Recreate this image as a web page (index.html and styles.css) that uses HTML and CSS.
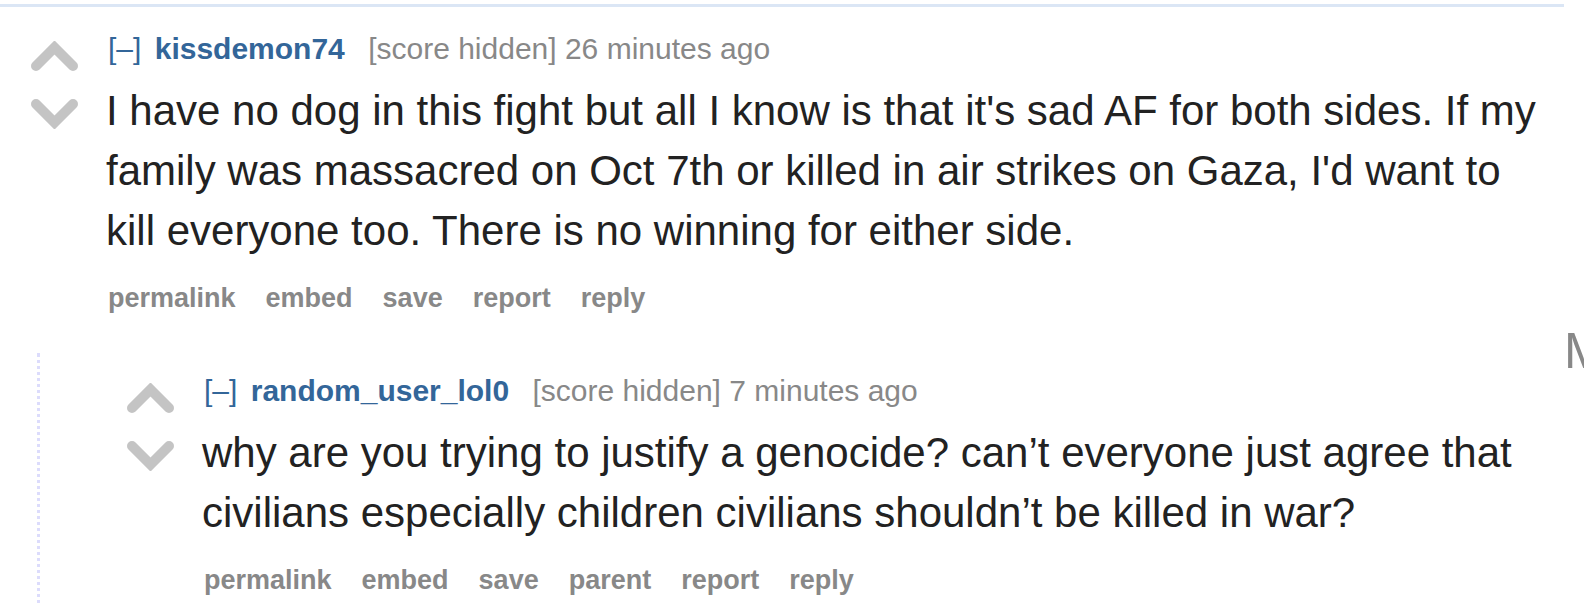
FILE: index.html
```html
<!DOCTYPE html>
<html lang="en">
<head>
<meta charset="utf-8" />
<title>comments</title>
<link rel="stylesheet" href="styles.css">
</head>
<body>
<div class="page">
  <div class="content">

    <div class="comment">
      <div class="thing">
        <div class="midcol">
          <svg class="arrow" viewBox="0 0 47 30"><polyline points="5,25 23.5,6.5 42,25" /></svg>
          <svg class="arrow" viewBox="0 0 47 30"><polyline points="5,5 23.5,23.5 42,5" /></svg>
        </div>
        <div class="entry">
          <p class="tagline"><a class="expand">[–]</a> <a class="author">kissdemon74</a> <span class="score">[score hidden]</span> <time>26 minutes ago</time></p>
          <div class="md"><p>I have no dog in this fight but all I know is that it's sad AF for both sides. If my family was massacred on Oct 7th or killed in air strikes on Gaza, I'd want to kill everyone too. There is no winning for either side.</p></div>
          <ul class="buttons">
            <li><a>permalink</a></li>
            <li><a>embed</a></li>
            <li><a>save</a></li>
            <li><a>report</a></li>
            <li><a>reply</a></li>
          </ul>
        </div>
      </div>

      <div class="child">
        <div class="comment">
          <div class="thing">
            <div class="midcol">
              <svg class="arrow" viewBox="0 0 47 30"><polyline points="5,25 23.5,6.5 42,25" /></svg>
              <svg class="arrow" viewBox="0 0 47 30"><polyline points="5,5 23.5,23.5 42,5" /></svg>
            </div>
            <div class="entry">
              <p class="tagline"><a class="expand">[–]</a> <a class="author">random_user_lol0</a> <span class="score">[score hidden]</span> <time>7 minutes ago</time></p>
              <div class="md"><p>why are you trying to justify a genocide? can’t everyone just agree that civilians especially children civilians shouldn’t be killed in war?</p></div>
              <ul class="buttons">
                <li><a>permalink</a></li>
                <li><a>embed</a></li>
                <li><a>save</a></li>
                <li><a>parent</a></li>
                <li><a>report</a></li>
                <li><a>reply</a></li>
              </ul>
            </div>
          </div>
        </div>
      </div>
    </div>

  </div>
  <div class="side"><h2>M</h2></div>
</div>
</body>
</html>
```

FILE: styles.css
```css
html {
  overflow: hidden;
}

body {
  margin: 0;
  background: #fff;
  font-family: "Liberation Sans", Arial, sans-serif;
}

.page {
  display: flex;
  align-items: flex-start;
}

.content {
  flex: none;
  width: 1564px;
  box-sizing: border-box;
  margin-top: 4px;
  padding-right: 20px;
  border-top: 3px solid #dbe6f5;
}

.side {
  flex: none;
  padding-top: 326px;
}

.side h2 {
  margin: 0;
  font-size: 50px;
  line-height: 50px;
  font-weight: normal;
  color: #888;
}

.comment {
  padding-left: 31px;
}

.content > .comment {
  padding-top: 24px;
}

.thing {
  display: flex;
}

.midcol {
  flex: none;
  width: 47px;
  margin-right: 30px;
  padding-top: 10px;
  display: flex;
  flex-direction: column;
  gap: 28px;
}

.arrow {
  display: block;
  width: 47px;
  height: 30px;
}

.arrow polyline {
  fill: none;
  stroke: #c4c4c4;
  stroke-width: 10;
  stroke-linecap: round;
}

.entry {
  flex: 1;
  min-width: 0;
}

.tagline {
  margin: 0;
  font-size: 30px;
  line-height: 36px;
  color: #888;
}

.expand {
  color: #369;
  margin-right: 5px;
}

.author {
  color: #369;
  font-weight: bold;
  margin-right: 15px;
}

.md {
  margin-top: 14px;
  margin-left: -2px;
  font-size: 42px;
  line-height: 60px;
  color: #222;
}

.md p {
  margin: 0;
}

.buttons {
  list-style: none;
  margin: 22px 0 0;
  padding: 0;
  display: flex;
  gap: 30px;
  font-size: 27px;
  line-height: 30px;
  font-weight: bold;
}

.buttons a {
  color: #888;
  text-decoration: none;
}

.child {
  margin-top: 40px;
  margin-left: 6px;
  padding: 20px 0 40px 56px;
  border-left: 3px dotted #dcdcfc;
}
```
